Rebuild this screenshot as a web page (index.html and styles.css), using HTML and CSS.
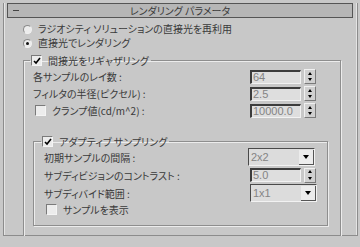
FILE: index.html
```html
<!DOCTYPE html>
<html lang="ja">
<head>
  <meta charset="UTF-8" />
  <title>レンダリング パラメータ</title>
  <link rel="stylesheet" href="styles.css">
</head>
<body>

<div class="panel">
  <div class="title">
    <span class="minus"></span>
    <span class="title-text">レンダリング パラメータ</span>
  </div>

  <div class="radio-row"><span class="radio"></span><span class="radio-text">ラジオシティ ソリューションの直接光を再利用</span></div>
  <div class="radio-row"><span class="radio on"></span><span class="radio-text">直接光でレンダリング</span></div>

  <!-- Regather group -->
  <fieldset class="group outer">
    <legend>
      <span class="check"><svg width="8" height="8" viewBox="0 0 8 8"><polyline points="1,4 3,6 7,1" fill="none" stroke="#000" stroke-width="1.6"/></svg></span>間接光をリギャザリング
    </legend>

    <div class="row">
      <span class="label wide">各サンプルのレイ数 :</span>
      <span class="field">64</span>
      <span class="spin"><span class="up"></span><span class="down"></span></span>
    </div>
    <div class="row">
      <span class="label wide">フィルタの半径(ピクセル) :</span>
      <span class="field">2.5</span>
      <span class="spin"><span class="up"></span><span class="down"></span></span>
    </div>
    <div class="row">
      <span class="label wide"><span class="check empty"></span>クランプ値(cd/m^2) :</span>
      <span class="field">10000.0</span>
      <span class="spin"><span class="up"></span><span class="down"></span></span>
    </div>

    <!-- Adaptive sampling group -->
    <fieldset class="group inner">
      <legend>
        <span class="check"><svg width="8" height="8" viewBox="0 0 8 8"><polyline points="1,4 3,6 7,1" fill="none" stroke="#000" stroke-width="1.6"/></svg></span>アダプティブ サンプリング
      </legend>

      <div class="row tall">
        <span class="label narrow">初期サンプルの間隔 :</span>
        <span class="combo first"><span class="combo-text">2x2</span><span class="combo-btn"></span></span>
      </div>
      <div class="row tall">
        <span class="label narrow">サブディビジョンのコントラスト :</span>
        <span class="field">5.0</span>
        <span class="spin"><span class="up"></span><span class="down"></span></span>
      </div>
      <div class="row tall">
        <span class="label narrow">サブディバイド範囲 :</span>
        <span class="combo"><span class="combo-text">1x1</span><span class="combo-btn"></span></span>
      </div>
      <div class="row short">
        <span class="label"><span class="check empty"></span>サンプルを表示</span>
      </div>
    </fieldset>
  </fieldset>
</div>

</body>
</html>
```

FILE: styles.css
```css
body {
  margin: 0;
  background: #c8c8c8;
  font-family: "Noto Sans CJK JP", sans-serif;
  font-size: 10px;
  font-feature-settings: "palt";
  color: #3a3a3a;
}
.panel {
  margin: 10px 2px 0 3px;
  height: 232px;
  border: 1px solid #8c8c8c;
  border-top: none;
  box-shadow: inset 1px 0 #e4e4e4, inset -1px 0 #e4e4e4;
}
.title {
  margin: -7px 4px 0 3px;
  height: 13px;
  border: 1px solid #555;
  background: #b6b6b6;
  display: flex;
  align-items: center;
  justify-content: center;
  position: relative;
}
.minus {
  position: absolute;
  left: 5px;
  top: 6px;
  width: 6px;
  height: 1px;
  background: #444;
}
.title-text {
  line-height: 13px;
}
.radio-row {
  display: flex;
  align-items: center;
  height: 14px;
  padding-left: 19px;
}
.title + .radio-row {
  margin-top: 4px;
}
.radio-text {
  line-height: 14px;
}
.radio {
  width: 7px;
  height: 7px;
  border-radius: 50%;
  border: 1px solid #8a8a8a;
  border-bottom-color: #f0f0f0;
  border-right-color: #f0f0f0;
  background: #ececec;
  margin-right: 6px;
  position: relative;
}
.radio.on::after {
  content: "";
  position: absolute;
  left: 2px;
  top: 2px;
  width: 3px;
  height: 3px;
  border-radius: 50%;
  background: #111;
}
.group {
  border: 1px solid #8e8e8e;
  box-shadow: inset 1px 1px #ececec, 1px 1px #ececec;
  margin: 0;
  min-width: 0;
}
.group legend {
  display: flex;
  align-items: center;
  height: 13px;
  line-height: 13px;
  padding: 0 2px 0 1px;
  margin-left: -3px;
}
.outer {
  margin: 4px 16px 0 19px;
  padding: 1px 12px 10px 9px;
}
.inner {
  margin-top: 16px;
  padding: 0 10px 9px 10px;
}
.row {
  display: flex;
  align-items: center;
  height: 17px;
}
.row.tall {
  height: 18px;
}
.row.short {
  height: 13px;
  margin-top: 1px;
}
.label {
  display: flex;
  align-items: center;
  white-space: nowrap;
}
.label.wide {
  width: 217px;
}
.label.narrow {
  width: 206px;
}
.check {
  width: 9px;
  height: 9px;
  border: 1px solid #7a7a7a;
  border-bottom-color: #f4f4f4;
  border-right-color: #f4f4f4;
  background: #ececec;
  margin-right: 6px;
  display: flex;
  align-items: center;
  justify-content: center;
}
.label .check {
  margin-left: 2px;
}
.field {
  width: 47px;
  height: 11px;
  border: 1px solid #f2f2f2;
  border-top: 2px solid #3c3c3c;
  border-left: 2px solid #3c3c3c;
  background: #dedede;
  font-family: "Liberation Sans", sans-serif;
  font-size: 11px;
  line-height: 11px;
  color: #848484;
  padding-left: 1px;
}
.spin {
  margin-left: 3px;
  width: 10px;
  height: 13px;
  display: flex;
  flex-direction: column;
  border: 1px solid #7a7a7a;
  border-top-color: #f0f0f0;
  border-left-color: #f0f0f0;
  background: #d0d0d0;
}
.spin span {
  flex: 1;
  display: flex;
  align-items: center;
  justify-content: center;
}
.spin .up::after {
  content: "";
  border: 2px solid transparent;
  border-bottom: 3px solid #000;
  border-top: none;
}
.spin .down::after {
  content: "";
  border: 2px solid transparent;
  border-top: 3px solid #000;
  border-bottom: none;
}
.combo {
  width: 65px;
  height: 16px;
  border: 1px solid #f2f2f2;
  border-top: 1px solid #4a4a4a;
  border-left: 1px solid #4a4a4a;
  background: #dcdcdc;
  display: flex;
  align-items: center;
  font-family: "Liberation Sans", sans-serif;
  font-size: 11px;
  color: #848484;
}
.combo.first {
  margin-left: -2px;
}
.combo-text {
  flex: 1;
  padding-left: 2px;
}
.combo-btn {
  width: 14px;
  height: 14px;
  background: #ececec;
  border-right: 1px solid #555;
  border-bottom: 1px solid #555;
  display: flex;
  align-items: center;
  justify-content: center;
}
.combo-btn::after {
  content: "";
  border: 3px solid transparent;
  border-top: 4px solid #000;
  border-bottom: none;
}
```
